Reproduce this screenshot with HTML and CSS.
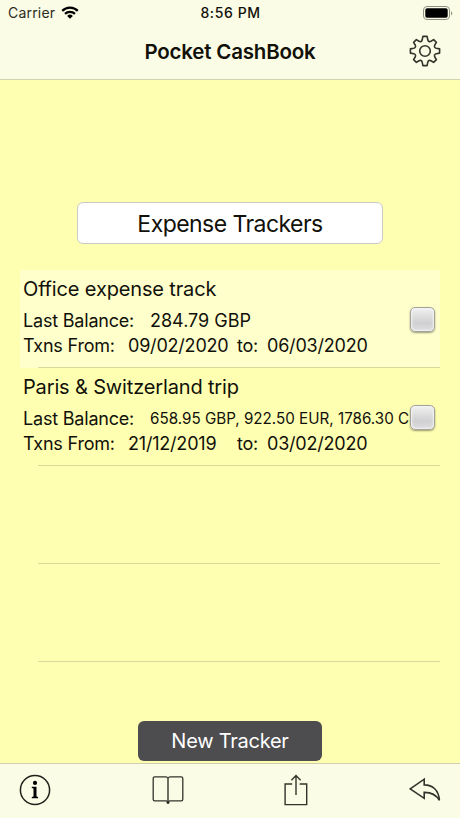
FILE: index.html
```
<!DOCTYPE html>
<html lang="en">
<head>
    <meta charset="UTF-8">
    <meta name="viewport" content="width=device-width, initial-scale=1.0">
    <title>Pocket CashBook</title>
    <link rel="stylesheet" href="styles.css">
</head>
<body>
    <div class="app">
        <header class="header">
            <div class="status-bar">
                <div class="carrier">
                    <span>Carrier</span>
                    <svg width="18" height="13" viewBox="0 0 18 13">
                        <path d="M1.2 4.9a11 11 0 0 1 15.6 0M4 7.9a7.1 7.1 0 0 1 10 0" fill="none" stroke="#000" stroke-width="2.2"/>
                        <path d="M9 12.8L6.1 10a4.1 4.1 0 0 1 5.8 0z"/>
                    </svg>
                </div>
                <div class="clock">8:56 PM</div>
                <div class="battery">
                    <svg width="30" height="14" viewBox="0 0 30 14">
                        <rect x="0.5" y="0.5" width="26" height="13" rx="3.5" fill="none" stroke="#8f9084"/>
                        <rect x="2.3" y="2.3" width="22.4" height="9.4" rx="1.8"/>
                        <path d="M28 5v4.4q1.2-.7 1.2-2.2T28 5z" fill="#8f9084"/>
                    </svg>
                </div>
            </div>
            <div class="nav-bar">
                <h1>Pocket CashBook</h1>
                <button class="icon-button" aria-label="Settings">
                    <svg width="32" height="32" viewBox="-16 -16 32 32" fill="none" stroke="#33332b" stroke-width="1.6" stroke-linejoin="round">
                        <path d="M-2.1-14.6H2.1L2.8-11.2Q3.5-8.6 6-9.8L8.6-11.4L11.4-8.6L9.8-6Q8.6-3.5 11.2-2.8L14.6-2.1V2.1L11.2 2.8Q8.6 3.5 9.8 6L11.4 8.6L8.6 11.4L6 9.8Q3.5 8.6 2.8 11.2L2.1 14.6H-2.1L-2.8 11.2Q-3.5 8.6-6 9.8L-8.6 11.4L-11.4 8.6L-9.8 6Q-8.6 3.5-11.2 2.8L-14.6 2.1V-2.1L-11.2-2.8Q-8.6-3.5-9.8-6L-11.4-8.6L-8.6-11.4L-6-9.8Q-3.5-8.6-2.8-11.2z"/>
                        <circle r="5.3"/>
                    </svg>
                </button>
            </div>
        </header>

        <main class="content">
            <div class="list-title">Expense Trackers</div>

            <div class="tracker-list">
                <div class="tracker selected">
                    <div class="name">Office expense track</div>
                    <div class="line balance">
                        <span class="label">Last Balance:</span>
                        <span class="amount">284.79 GBP</span>
                    </div>
                    <div class="line">
                        <span class="from">Txns From:</span>
                        <span class="date">09/02/2020</span>
                        <span class="to">to:</span>
                        <span class="date">06/03/2020</span>
                    </div>
                    <button class="check" aria-label="Select"></button>
                </div>
                <div class="tracker">
                    <div class="name">Paris &amp; Switzerland trip</div>
                    <div class="line balance">
                        <span class="label">Last Balance:</span>
                        <span class="amount small">658.95 GBP, 922.50 EUR, 1786.30 C</span>
                    </div>
                    <div class="line">
                        <span class="from">Txns From:</span>
                        <span class="date">21/12/2019</span>
                        <span class="to">to:</span>
                        <span class="date">03/02/2020</span>
                    </div>
                    <button class="check" aria-label="Select"></button>
                </div>
                <div class="tracker"></div>
                <div class="tracker"></div>
            </div>

            <button class="new-tracker">New Tracker</button>
        </main>

        <footer class="toolbar">
            <button class="icon-button" aria-label="Info">
                <svg width="32" height="32" viewBox="0 0 32 32">
                    <circle cx="16" cy="16" r="14.6" fill="none" stroke="#22221c" stroke-width="1.5"/>
                    <circle cx="16" cy="8.9" r="2.1"/>
                    <path d="M12.8 12.8h4.7v9.7l1.6.4v1.3h-6.3v-1.3l1.7-.4v-8l-1.7-.4z"/>
                </svg>
            </button>
            <button class="icon-button" aria-label="Book">
                <svg width="32" height="32" viewBox="0 0 32 32" fill="none" stroke="#33332b" stroke-width="1.3">
                    <path d="M15.6 4.2q-.3-1.3-1.6-1.3H2.8q-1.6 0-1.6 1.6v20.7q0 1.6 1.6 1.6h11q1.4 0 1.8 1M16.4 4.2q.3-1.3 1.6-1.3h11.2q1.6 0 1.6 1.6v20.7q0 1.6-1.6 1.6h-11q-1.4 0-1.8 1"/>
                    <path d="M16 4v24" stroke-width="1.7" stroke="#55554b"/>
                    <circle cx="16" cy="28.6" r="1.4" fill="#22221c" stroke="none"/>
                </svg>
            </button>
            <button class="icon-button" aria-label="Share">
                <svg width="32" height="32" viewBox="0 0 32 32" fill="none" stroke="#33332b" stroke-width="1.4">
                    <path d="M12.2 10H5.1v20.6h21.6V10h-7.1"/>
                    <path d="M16 21V2M11.4 6.2L16 1.6l4.6 4.6"/>
                </svg>
            </button>
            <button class="icon-button" aria-label="Back">
                <svg width="32" height="32" viewBox="0 0 32 32" fill="none" stroke="#33332b" stroke-width="1.6">
                    <path d="M1.2 14.8L15.2 5.2v5.7C23.5 10.9 29.8 16 30.4 26.4 27 20.5 22 18.3 15.2 18.4v5.9z"/>
                </svg>
            </button>
        </footer>
    </div>
</body>
</html>
```

FILE: styles.css
```
* {
    box-sizing: border-box;
}
body {
    margin: 0;
    font-family: Inter, "Liberation Sans", sans-serif;
    background: #ffffb2;
    color: #11110a;
}
button {
    padding: 0;
    border: none;
    background: none;
    font-family: inherit;
}
svg {
    display: block;
}
.app {
    height: 818px;
    display: flex;
    flex-direction: column;
}

/* header */
.header {
    height: 80px;
    background: #fbfce6;
    border-bottom: 1px solid #d3d3b0;
}
.status-bar {
    height: 25px;
    padding: 0 7px 0 8px;
    display: grid;
    grid-template-columns: 1fr auto 1fr;
    align-items: center;
}
.carrier {
    display: flex;
    align-items: center;
    gap: 6px;
    font-size: 14px;
    letter-spacing: 0.2px;
    color: #2b2b24;
}
.clock {
    font-size: 14px;
    font-weight: 500;
    letter-spacing: 0.6px;
}
.battery {
    justify-self: end;
}
.nav-bar {
    height: 52px;
    padding: 0 19px;
    display: grid;
    grid-template-columns: 32px 1fr 32px;
    align-items: center;
}
.nav-bar h1 {
    grid-column: 2;
    margin: 0;
    text-align: center;
    font-size: 20.5px;
    font-weight: 600;
    letter-spacing: -0.2px;
}

/* tracker list */
.content {
    flex: 1;
    display: flex;
    flex-direction: column;
    align-items: center;
}
.list-title {
    width: 306px;
    height: 42px;
    margin-top: 122px;
    border: 1px solid #c9cbc5;
    border-radius: 6px;
    background: white;
    text-align: center;
    font-size: 23px;
    line-height: 42px;
    letter-spacing: -0.55px;
}
.tracker-list {
    width: 420px;
    margin-top: 26px;
}
.tracker {
    position: relative;
    height: 98px;
    padding: 5px 0 0 3px;
    background: linear-gradient(#d9d99c, #d9d99c) 18px bottom / 100% 1px no-repeat;
}
.selected {
    background-color: #ffffcc;
}
.name {
    font-size: 20px;
    line-height: 28px;
    letter-spacing: -0.15px;
}
.line {
    display: flex;
    align-items: center;
    font-size: 18px;
    line-height: 25px;
    letter-spacing: -0.2px;
    white-space: nowrap;
}
.balance {
    margin-top: 5px;
}
.label {
    width: 127px;
}
.amount {
    letter-spacing: 0;
}
.small {
    font-size: 15.2px;
}
.from {
    width: 105px;
}
.date {
    width: 109px;
}
.to {
    width: 30px;
}
.check {
    position: absolute;
    right: 5px;
    top: 37px;
    width: 25px;
    height: 25px;
    border: 1px solid #a3a39a;
    border-radius: 5px;
    background: linear-gradient(#f1f1f1, #d0d0d2 65%, #dedee0);
    box-shadow: inset 0 0 2px 1px #f4f4f4, 0 1px 2px rgba(0,0,0,0.4);
}
.new-tracker {
    width: 184px;
    height: 40px;
    margin-top: 59px;
    border-radius: 6px;
    background: #4d4d4f;
    color: white;
    font-size: 20px;
    letter-spacing: -0.25px;
}

/* toolbar */
.toolbar {
    height: 55px;
    padding: 0 19px 2px;
    border-top: 1px solid #cfcfb0;
    background: #fbfce6;
    display: grid;
    grid-template-columns: 133px 128px 1fr 32px;
    align-items: center;
}
.toolbar .icon-button {
    width: 32px;
}
```
